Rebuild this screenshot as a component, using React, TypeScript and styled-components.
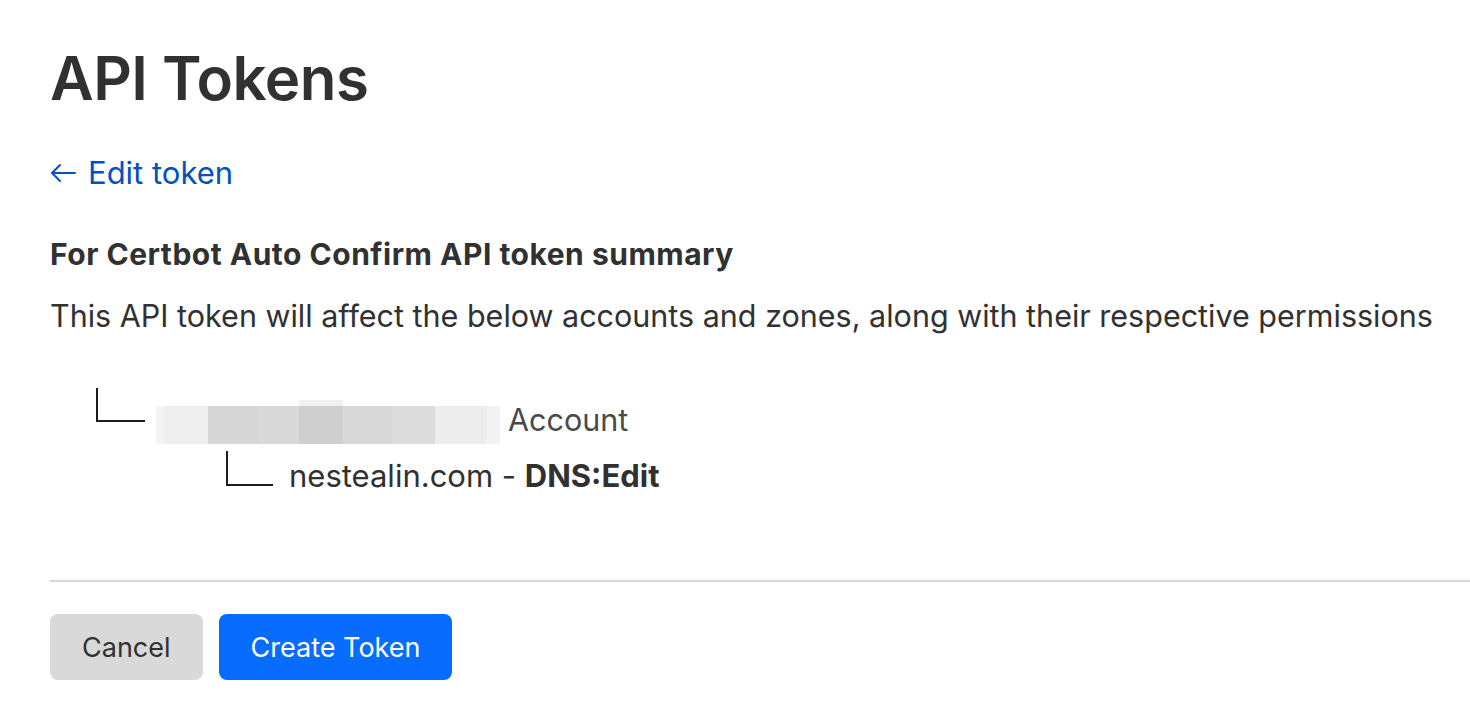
import React from "react";
import styled, { createGlobalStyle } from "styled-components";

const GlobalStyle = createGlobalStyle`
  html, body {
    margin: 0;
    padding: 0;
    background: #ffffff;
  }
  body {
    font-family: Inter, "Liberation Sans", Arial, sans-serif;
    color: #313131;
    -webkit-font-smoothing: antialiased;
  }
`;

const Page = styled.main`
  padding: 28px 0 0 50px;
  width: 1420px;
`;

const Title = styled.h1`
  margin: 0;
  font-size: 60px;
  line-height: 100px;
  font-weight: 600;
  letter-spacing: -0.5px;
  color: #313131;
`;

const BackLink = styled.a`
  display: inline-flex;
  align-items: center;
  gap: 12px;
  margin-top: 25px;
  font-size: 31px;
  line-height: 40px;
  color: #0051c3;
  text-decoration: none;
  cursor: pointer;
`;

const SummaryTitle = styled.h2`
  margin: 41px 0 0;
  font-size: 30px;
  line-height: 40px;
  font-weight: 700;
  letter-spacing: 0.5px;
  color: #313131;
`;

const Description = styled.p`
  margin: 22px 0 0;
  font-size: 30.5px;
  line-height: 40px;
  color: #313131;
`;

const Tree = styled.div`
  display: flex;
  flex-direction: column;
  gap: 7px;
  margin-top: 52px;
`;

const TreeRow = styled.div<{ $indent: number }>`
  display: flex;
  align-items: flex-start;
  padding-left: ${(p) => p.$indent}px;
`;

const Connector = styled.span<{ $w: number; $h: number }>`
  display: block;
  flex: none;
  width: ${(p) => p.$w}px;
  height: ${(p) => p.$h}px;
  border-left: 2px solid #1d1d1d;
  border-bottom: 2px solid #1d1d1d;
  box-sizing: border-box;
`;

const Redacted = styled.span`
  display: flex;
  position: relative;
  height: 38px;
  margin: 18px 8px 0 11px;
`;

const Pixel = styled.span<{ $w: number; $c: string }>`
  display: block;
  width: ${(p) => p.$w}px;
  height: 100%;
  background: ${(p) => p.$c};
`;

const PixelCap = styled.span`
  position: absolute;
  left: 143px;
  top: -6px;
  width: 44px;
  height: 6px;
  background: #f1f1f1;
`;

const AccountLabel = styled.span`
  margin-top: 12px;
  font-size: 30.5px;
  line-height: 40px;
  color: #4a4a4a;
`;

const ZoneLabel = styled.span`
  margin: 5px 0 0 16px;
  font-size: 31px;
  line-height: 40px;
  color: #313131;

  strong {
    font-weight: 700;
  }
`;

const Divider = styled.hr`
  margin: 84px 0 0;
  border: 0;
  height: 2px;
  background: #d9d9d9;
`;

const Actions = styled.div`
  display: flex;
  gap: 16px;
  margin-top: 32px;
`;

const Button = styled.button<{ $primary?: boolean }>`
  height: 66px;
  padding: 0 32px;
  border: 0;
  border-radius: 8px;
  font-family: Inter, "Liberation Sans", Arial, sans-serif;
  font-size: 27px;
  cursor: pointer;
  background: ${(p) => (p.$primary ? "#086dff" : "#d9d9d9")};
  color: ${(p) => (p.$primary ? "#ffffff" : "#313131")};
`;

const pixels: [number, string][] = [
  [8, "#f4f4f4"],
  [44, "#eeeeee"],
  [50, "#d6d6d6"],
  [41, "#d9d9d9"],
  [44, "#cfcfcf"],
  [49, "#d9d9d9"],
  [43, "#dcdcdc"],
  [52, "#ededed"],
  [13, "#f3f3f3"],
];

const ArrowLeft = () => (
  <svg width="26" height="20" viewBox="0 0 26 20" fill="none" stroke="#0051c3" strokeWidth="2" strokeLinecap="round" strokeLinejoin="round">
    <path d="M25 10H2M10 2L2 10l8 8" />
  </svg>
);

export default function App() {
  return (
    <>
      <GlobalStyle />
      <Page>
        <Title>API Tokens</Title>
        <BackLink>
          <ArrowLeft />
          Edit token
        </BackLink>
        <SummaryTitle>For Certbot Auto Confirm API token summary</SummaryTitle>
        <Description>
          This API token will affect the below accounts and zones, along with their respective permissions
        </Description>
        <Tree>
          <TreeRow $indent={46}>
            <Connector $w={49} $h={34} />
            <Redacted>
              <PixelCap />
              {pixels.map(([w, c], i) => (
                <Pixel key={i} $w={w} $c={c} />
              ))}
            </Redacted>
            <AccountLabel>Account</AccountLabel>
          </TreeRow>
          <TreeRow $indent={176}>
            <Connector $w={47} $h={35} />
            <ZoneLabel>
              nestealin.com - <strong>DNS:Edit</strong>
            </ZoneLabel>
          </TreeRow>
        </Tree>
        <Divider />
        <Actions>
          <Button>Cancel</Button>
          <Button $primary>Create Token</Button>
        </Actions>
      </Page>
    </>
  );
}
